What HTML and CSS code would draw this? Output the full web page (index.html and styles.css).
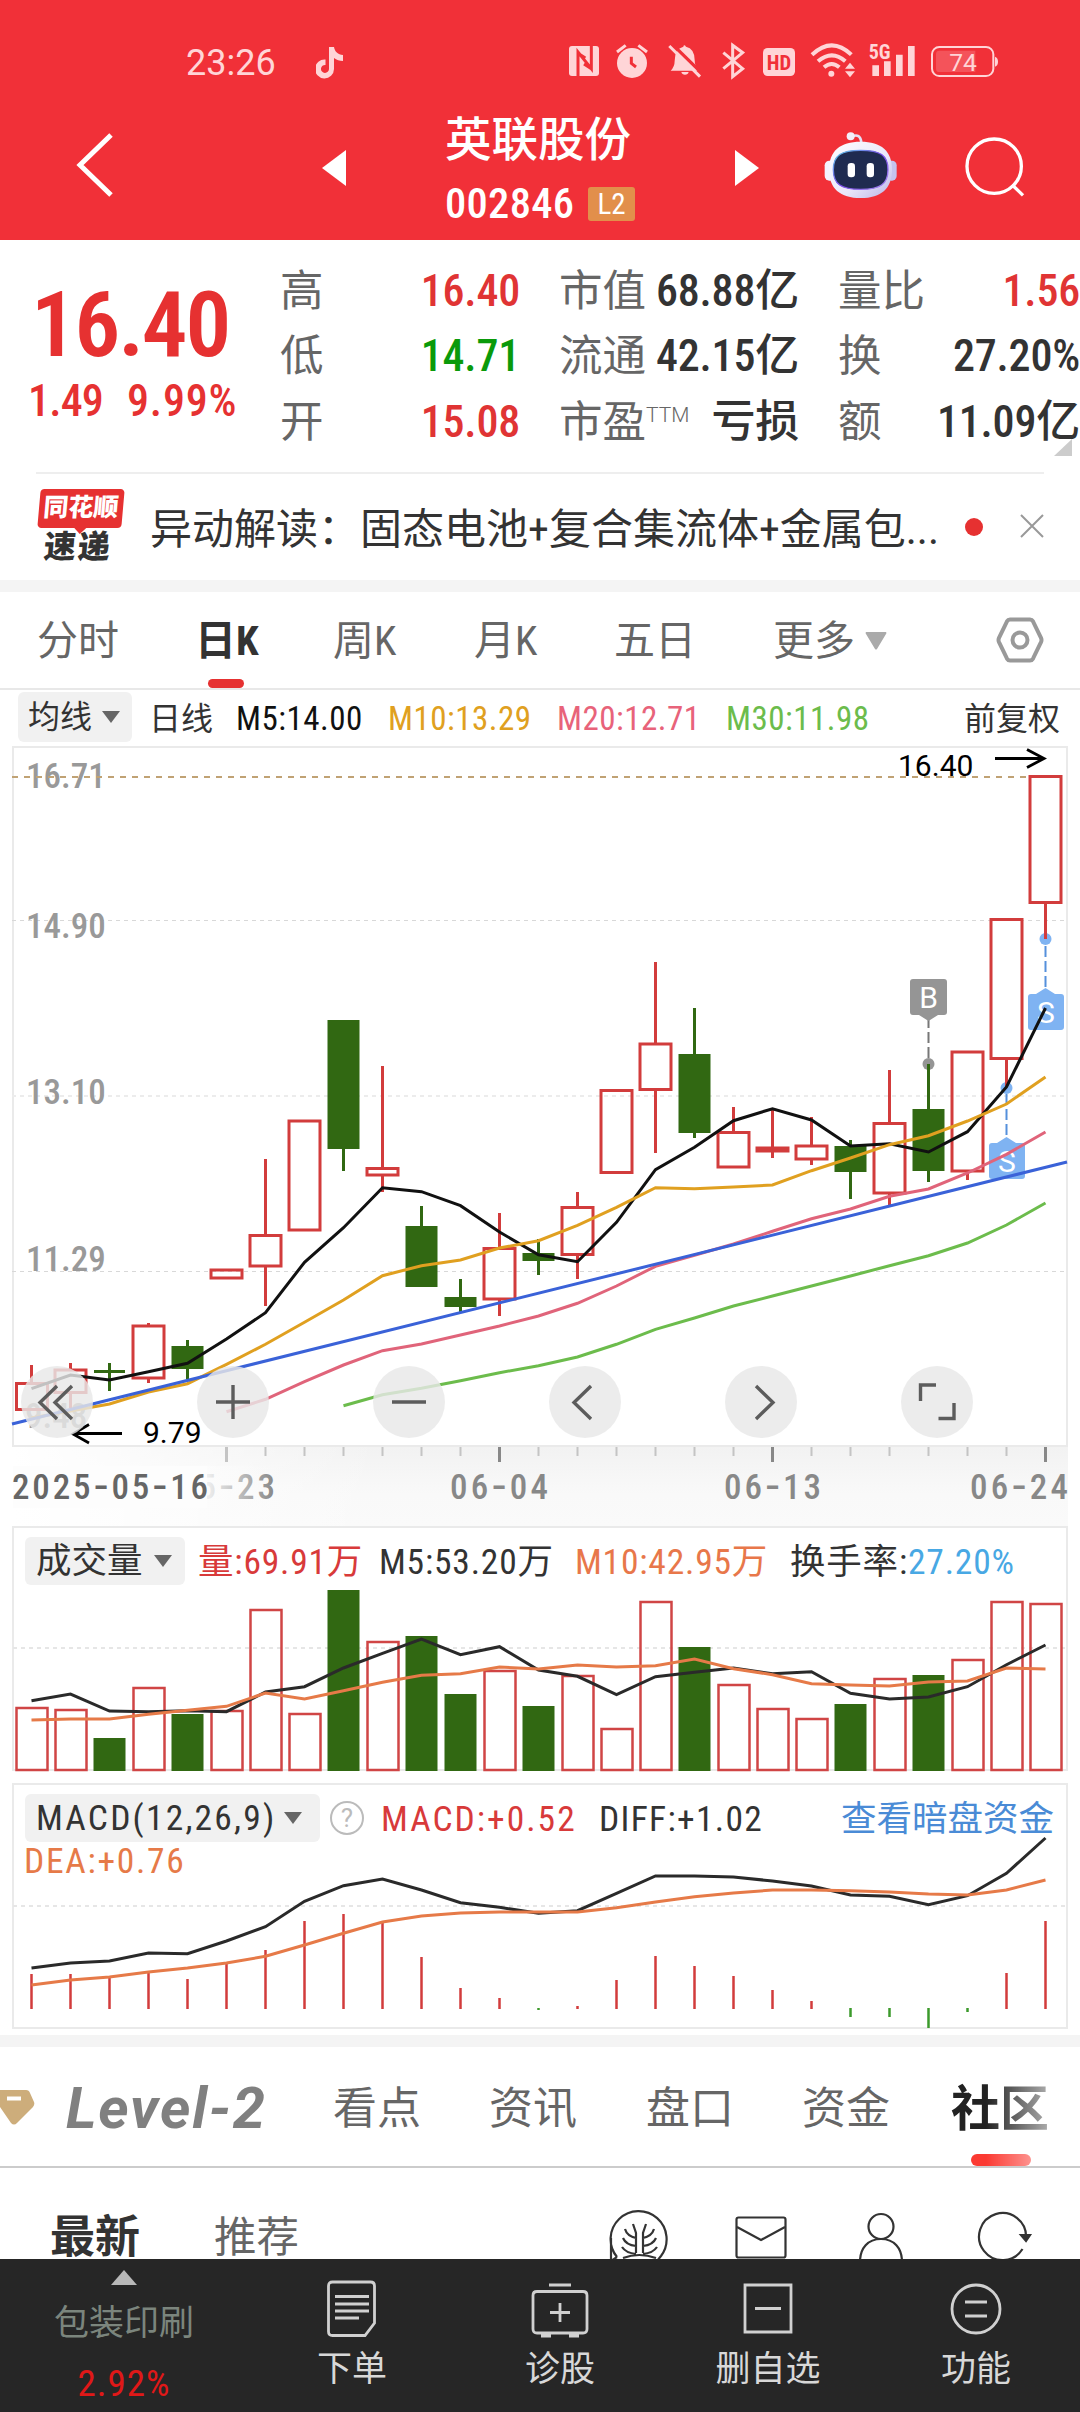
FILE: index.html
```html
<!DOCTYPE html>
<html lang="zh-CN">
<head>
<meta charset="utf-8">
<title>英联股份 002846</title>
<link rel="stylesheet" href="styles.css">
</head>
<body>
<div class="app">
  <header class="header">
    <div class="status">
      <span class="clock">23:26</span>
      <svg class="note" viewBox="0 0 28 32"><path d="M13 0h5c.6 4.500 4 7.500 9 8v6c-3.500 0-6.500-1-9-3v11a9.500 9.500 0 1 1-8.500-9.500v5.500a4 4 0 1 0 3.500 4z"/></svg>
      <svg class="status-icons" viewBox="0 30 1320 120">
        <path d="M36 48h72q9 0 9 9v72q0 9-9 9H36q-9 0-9-9V57q0-9 9-9z" class="on"/>
        <path d="M54 138V66l40 50V48M54 70l22 14M94 116l-22-14" class="cut thick"/>
        <circle cx="216" cy="99" r="45" class="on"/>
        <path d="M171 66l26-20M261 66l-26-20" class="ln"/>
        <path d="M214 80v20l14 11" class="cut thick"/>
        <path d="M332 122q12-12 12-30 0-36 26-42 2-8 8 0 26 6 26 40 0 20 12 32zM364 126h22q-2 8-11 8t-11-8z" class="on"/>
        <path d="M338 44l92 90" class="cut wide"/><path d="M328 48l92 92" class="ln"/>
        <path d="M490 68l58 48-30 24V46l30 22-58 48" class="ln"/>
        <rect x="609" y="54" width="96" height="84" rx="14" class="on"/>
        <text x="657" y="120" class="hd">HD</text>
        <path d="M756 74q60-56 118 0M774 94q42-36 82 0M792 112q23-20 46 0" class="ln arc"/>
        <circle cx="814" cy="131" r="9" class="on"/>
        <path d="M855 116l15-18 15 18zM855 124h30l-15 18z" class="on"/>
        <text x="926" y="87" class="fiveg">5G</text>
        <path d="M937 106h20v32h-20zM972 94h20v44h-20zM1008 74h20v64h-20zM1044 48h20v90h-20z" class="on"/>
        <rect x="1116" y="51" width="184" height="87" rx="22" class="ln thin"/>
        <path d="M1138 62h108v64h-108q-10 0-10-10V72q0-10 10-10z" class="charge"/>
        <path d="M1305 80q9 3 9 15t-9 15z" class="on"/>
        <text x="1209" y="122" class="pct">74</text>
      </svg>
    </div>
    <nav class="nav">
      <svg class="back" viewBox="0 0 40 64"><path d="M35 2L4 32l31 30"/></svg>
      <svg class="tri" viewBox="0 0 24 36"><path d="M24 0v36L0 18z"/></svg>
      <div class="title">
        <h1>英联股份</h1>
        <p><span>002846</span><b>L2</b></p>
      </div>
      <svg class="tri" viewBox="0 0 24 36"><path d="M0 0v36l24-18z"/></svg>
      <svg class="robot" viewBox="790 300 225 210">
        <defs>
          <linearGradient id="shell" x1="0" y1="0" x2="1" y2="1"><stop offset="0" stop-color="#fff"/><stop offset=".6" stop-color="#e9e6fa"/><stop offset="1" stop-color="#b9b4e6"/></linearGradient>
          <linearGradient id="rim" x1="0" y1="0" x2="1" y2="1"><stop offset="0" stop-color="#5fd0e8"/><stop offset=".5" stop-color="#7a4be8"/><stop offset="1" stop-color="#a78bf0"/></linearGradient>
        </defs>
        <path d="M876 320q26-12 29 18" fill="none" stroke="#e4e0f4" stroke-width="8"/>
        <circle cx="873" cy="319" r="12" fill="#f3effa"/>
        <rect x="795" y="392" width="30" height="60" rx="14" fill="#f4f2ff"/>
        <rect x="981" y="392" width="30" height="60" rx="14" fill="#c5c3ee"/>
        <path d="M903 335c62 0 94 28 94 84s-32 85-94 85-95-29-95-85 33-84 95-84z" fill="url(#shell)"/>
        <path d="M903 361c58 0 82 14 82 58s-24 59-82 59-82-15-82-59 24-58 82-58z" fill="#1f2b50" stroke="url(#rim)" stroke-width="4"/>
        <rect x="864" y="399" width="22" height="43" rx="10" fill="#fff"/><rect x="921" y="399" width="22" height="43" rx="10" fill="#fff"/>
      </svg>
      <svg class="search" viewBox="1210 315 190 190"><circle cx="1304" cy="409" r="82"/><path d="M1358 465l33 32"/></svg>
    </nav>
  </header>

  <section class="quote">
    <div class="price">
      <strong>16.40</strong>
      <p><span>1.49</span><span>9.99%</span></p>
    </div>
    <dl class="stats">
      <dt>高</dt><dd class="up">16.40</dd><dt>市值</dt><dd>68.88亿</dd><dt>量比</dt><dd class="up">1.56</dd>
      <dt>低</dt><dd class="down">14.71</dd><dt>流通</dt><dd>42.15亿</dd><dt>换</dt><dd>27.20%</dd>
      <dt>开</dt><dd class="up">15.08</dd><dt>市盈<sup>TTM</sup></dt><dd>亏损</dd><dt>额</dt><dd>11.09亿</dd>
    </dl>
    <i class="corner"></i>
  </section>

  <section class="news">
    <div class="logo"><span class="logo-top">同花顺</span><span class="logo-bottom">速递</span></div>
    <p>异动解读：固态电池+复合集流体+金属包...</p>
    <i class="dot"></i>
    <svg class="close" viewBox="0 0 24 24"><path d="M1 1l22 22M23 1L1 23"/></svg>
  </section>

  <nav class="periods">
    <a>分时</a><a class="active">日K</a><a>周K</a><a>月K</a><a>五日</a>
    <a>更多<svg viewBox="0 0 22 18"><path d="M1 0h20q1 1 0 2L12 17q-1 1-2 0L1 2q-1-1 0-2z"/></svg></a>
    <svg class="hex" viewBox="0 0 48 46"><path d="M14 2.500h20q2 0 3 1.800l8 16.500q1 2.200 0 4.400l-8 16.500q-1 1.800-3 1.800H14q-2 0-3-1.800L3 25.200q-1-2.200 0-4.400l8-16.500q1-1.800 3-1.800z"/><circle cx="24" cy="23" r="7.500"/></svg>
  </nav>

  <div class="ma">
    <span class="select">均线<i></i></span>
    <span class="day">日线</span>
    <span class="m5">M5:14.00</span><span class="m10">M10:13.29</span><span class="m20">M20:12.71</span><span class="m30">M30:11.98</span>
    <span class="adjust">前复权</span>
  </div>

  <svg class="kline" viewBox="0 746 1080 780">
    <defs>
      <linearGradient id="axis-x"><stop offset="0" stop-color="#fff"/><stop offset=".35" stop-color="#fff" stop-opacity="0"/></linearGradient>
      <linearGradient id="axis-y" x1="0" y1="0" x2="0" y2="1"><stop offset="0" stop-color="#f2f2f2"/><stop offset=".6" stop-color="#f9f9f9"/><stop offset="1" stop-color="#fafafa"/></linearGradient>
      <linearGradient id="date-fade" gradientUnits="userSpaceOnUse" x1="206" y1="0" x2="275" y2="0"><stop offset="0" stop-color="#fcfcfc" stop-opacity=".9"/><stop offset="1" stop-color="#fafafa" stop-opacity="0"/></linearGradient>
    </defs>
    <rect x="13" y="1447" width="1055" height="79" fill="url(#axis-y)"/>
    <rect x="13" y="1447" width="1055" height="79" fill="url(#axis-x)"/>
    <rect x="13" y="747" width="1054" height="699" class="frame"/>
    <path d="M12 920.500H1066M12 1271.500H1066" class="grid"/>
    <path d="M12 1096H1066" class="grid soft"/>
    <g class="price-label">
      <text x="26" y="788">16.71</text><text x="26" y="938">14.90</text><text x="26" y="1104">13.10</text><text x="26" y="1271">11.29</text><text x="25" y="1428">9.48</text>
    </g>
    <path d="M12 777H1030" class="last"/>
    <g class="mark"><circle cx="928.500" cy="1064" r="6"/><path d="M928.500 1058v-38" class="dash"/><path d="M913 979h31q3 0 3 3v30q0 3-3 3h-6l-9.500 6-9.500-6h-6q-3 0-3-3v-30q0-3 3-3z"/></g>
    <g class="mark sell"><circle cx="1045.500" cy="939" r="6"/><path d="M1045.500 946v42" class="dash"/><path d="M1030 994h6l9.500-6 9.500 6h6q3 0 3 3v30q0 3-3 3h-30q-3 0-3-3v-30q0-3 3-3z"/></g>
    <g class="mark sell"><circle cx="1006.500" cy="1088" r="6"/><path d="M1006.500 1094v43" class="dash"/><path d="M991 1143h6l9.500-6 9.500 6h6q3 0 3 3v30q0 3-3 3h-30q-3 0-3-3v-30q0-3 3-3z"/></g>
    <g class="mark-text"><text x="928.500" y="1007.500">B</text><text x="1046" y="1023">S</text><text x="1007" y="1172">S</text></g>
    <g class="red">
      <path d="M16.500 1383.500h31v26h-31zM55 1370h31v22.500h-31zM133 1326h31v52h-31zM211 1270h31v8h-31zM250 1235.500h31v30.500h-31zM289 1121h31v109h-31zM367 1168.500h31v6.500h-31zM484 1248.500h31v50.500h-31zM562 1207.500h31v47h-31zM601 1090.500h31v82h-31zM640 1044h31v45.500h-31zM718 1132.500h31v34.500h-31zM757 1148h31v3h-31zM796 1146h31v13h-31zM874 1123.500h31v69.500h-31zM952 1052h31v119h-31zM991 919.500h31v139h-31zM1030 776.500h31v126h-31z"/>
      <path d="M31.500 1365v18M70.500 1363v7M70.500 1393v15M148.500 1323v3M148.500 1379v4M265.500 1159v76M265.500 1267v39M382.500 1066v102M382.500 1175v17M499.500 1213v35M499.500 1300v16M577.500 1192v15M577.500 1256v23M655.500 962v81M655.500 1091v62M733.500 1107v25M772.500 1109v49M811.500 1117v29M811.500 1160v5M889.500 1070v53M889.500 1194v11M967.500 1172v8M1006.500 1060v27M1045.500 904v35"/>
    </g>
    <g class="green">
      <path d="M171.500 1346h32v23h-32zM327.500 1020h32v129h-32zM405.500 1226h32v61h-32zM444.500 1297h32v10h-32zM522.500 1253h32v8h-32zM678.500 1054h32v79h-32zM834.500 1146h32v26h-32zM912.500 1109h32v62h-32z"/>
      <path d="M94 1371.500h31M109.500 1363v28M187.500 1340v39M343.500 1149v22M421.500 1206v20M460.500 1279v33M538.500 1239v36M694.500 1008v130M850.500 1140v59M928.500 1064v118"/>
    </g>
    <polyline class="l30" points="343.500,1405.700 382.500,1394.700 421.500,1388.300 460.500,1380.700 499.500,1372.700 538.500,1365.700 577.500,1357 616.500,1344.300 655.500,1329.300 694.500,1318 733.500,1306 772.500,1296 811.500,1286 850.500,1276 889.500,1265.700 928.500,1255.700 967.500,1243 1006.500,1225 1045.500,1203"/>
    <polyline class="l20" points="226.500,1411.700 265.500,1399.300 304.500,1381.700 343.500,1365 382.500,1350.700 421.500,1344 460.500,1335 499.500,1326 538.500,1316 577.500,1303.300 616.500,1286 655.500,1266.300 694.500,1255.300 733.500,1244 772.500,1231.300 811.500,1218.700 850.500,1209 889.500,1196.300 928.500,1189 967.500,1173 1006.500,1154.300 1045.500,1132"/>
    <polyline class="l5" points="31.500,1388.700 70.500,1375 109.500,1380 148.500,1371.700 187.500,1363.300 226.500,1339 265.500,1312.700 304.500,1262.300 343.500,1227.700 382.500,1187.700 421.500,1191.700 460.500,1205.700 499.500,1232 538.500,1254.700 577.500,1261.700 616.500,1222.300 655.500,1169.700 694.500,1147.300 733.500,1120.700 772.500,1108.700 811.500,1120 850.500,1146 889.500,1143.700 928.500,1152 967.500,1131.700 1006.500,1087 1045.500,1008"/>
    <polyline class="l10" points="31.500,1418 70.500,1411 109.500,1404 148.500,1392 187.500,1383.700 226.500,1364.300 265.500,1344.300 304.500,1322.300 343.500,1300 382.500,1275.700 421.500,1265.700 460.500,1260 499.500,1248 538.500,1240.700 577.500,1225.300 616.500,1207.300 655.500,1187.700 694.500,1188.700 733.500,1187 772.500,1185 811.500,1170.700 850.500,1158 889.500,1144.700 928.500,1135.700 967.500,1121 1006.500,1104 1045.500,1077"/>
    <path d="M12 1424L1067 1162" class="trend"/>
    <g class="extreme">
      <text x="898" y="776">16.40</text><path d="M995 758.500h48M1027 749.500l17 9-17 9"/>
      <text x="143" y="1443">9.79</text><path d="M122 1433.500H74M89 1424.500l-16 9.500 16 9"/>
    </g>
    <g class="tool">
      <circle cx="57" cy="1402" r="36"/><circle cx="233" cy="1402" r="36"/><circle cx="409" cy="1402" r="36"/><circle cx="585" cy="1402" r="36"/><circle cx="761" cy="1402" r="36"/><circle cx="937" cy="1402" r="36"/>
      <path d="M57 1386l-17 16.500 17 16.500M72 1386l-17 16.500 17 16.500M216 1402h34M233 1385v34M392 1402h34M591 1386l-17 16.500 17 16.500M756 1386l17 16.500-17 16.500M920.500 1401v-16H936M938.500 1418.500h15.500V1403"/>
    </g>
    <path class="tick" d="M265.500 1447v9M304.500 1447v9M343.500 1447v9M382.500 1447v9M421.500 1447v9M460.500 1447v9M538.500 1447v9M577.500 1447v9M616.500 1447v9M655.500 1447v9M694.500 1447v9M733.500 1447v9M811.500 1447v9M850.500 1447v9M889.500 1447v9M928.500 1447v9M967.500 1447v9M1006.500 1447v9"/>
    <path class="tick wide" d="M226.500 1447v15"/>
    <path class="tick major" d="M499.500 1447v15M772.500 1447v15M1045.500 1447v15"/>
    <g class="dates">
      <text x="178" y="1499" textLength="97">05<tspan>-</tspan>23</text>
      <rect x="170" y="1466" width="106" height="42" fill="url(#date-fade)"/>
      <rect x="13" y="1466" width="194" height="42" fill="#fdfdfd"/>
      <text x="12" y="1499" textLength="196" class="first">2025<tspan>-</tspan>05<tspan>-</tspan>16</text>
      <text x="450" y="1499" textLength="98">06<tspan>-</tspan>04</text><text x="724" y="1499" textLength="97">06<tspan>-</tspan>13</text><text x="970" y="1499" textLength="98">06<tspan>-</tspan>24</text>
    </g>
  </svg>

  <section class="panel volume">
    <svg class="plot" viewBox="0 1526 1080 246">
      <path d="M13 1771V1527H1067V1771M13 1770H1067" class="frame"/>
      <path d="M13 1648H1067" class="grid dots"/>
      <path class="vred" d="M16.500 1708h31v62h-31zM55.500 1710h31v60h-31zM133.500 1688h31v82h-31zM211.500 1711h31v59h-31zM250.500 1610h31v160h-31zM289.500 1714h31v56h-31zM367.500 1642h31v128h-31zM484.500 1671h31v99h-31zM562.500 1676h31v94h-31zM601.500 1729h31v41h-31zM640.500 1602h31v168h-31zM718.500 1685h31v85h-31zM757.500 1709h31v61h-31zM796.500 1719h31v51h-31zM874.500 1679h31v91h-31zM952.500 1660h31v110h-31zM991.500 1602h31v168h-31zM1030.500 1604h31v166h-31z"/>
      <path class="vgreen" d="M93.500 1738h32v33h-32zM171.500 1714h32v57h-32zM327.500 1590h32v181h-32zM405.500 1636h32v135h-32zM444.500 1694h32v77h-32zM522.500 1706h32v65h-32zM678.500 1647h32v124h-32zM834.500 1704h32v67h-32zM912.500 1675h32v96h-32z"/>
      <polyline class="dark" points="31.500,1700.700 70.500,1694 109.500,1711 148.500,1711.700 187.500,1710.700 226.500,1711.700 265.500,1692 304.500,1686.700 343.500,1668 382.500,1653.300 421.500,1639 460.500,1654.700 499.500,1646.700 538.500,1670 577.500,1676.300 616.500,1694.700 655.500,1676.700 694.500,1672.300 733.500,1668 772.500,1673.700 811.500,1671.700 850.500,1693.300 889.500,1699 928.500,1697 967.500,1686.700 1006.500,1664.700 1045.500,1645"/>
      <polyline class="orange" points="31.500,1720 70.500,1719 109.500,1719 148.500,1714.300 187.500,1710.300 226.500,1706.300 265.500,1693 304.500,1699 343.500,1690.700 382.500,1682.300 421.500,1675.300 460.500,1673.700 499.500,1667 538.500,1669 577.500,1665 616.500,1667 655.500,1665.700 694.500,1659 733.500,1668.700 772.500,1674.700 811.500,1683.700 850.500,1685 889.500,1686 928.500,1682 967.500,1681 1006.500,1668 1045.500,1669"/>
    </svg>
    <div class="legend">
      <span class="select">成交量<i></i></span>
      <span class="c-red">量:69.91万</span><span>M5:53.20万</span><span class="c-orange">M10:42.95万</span><span>换手率:<em>27.20%</em></span>
    </div>
  </section>

  <section class="panel macd">
    <svg class="plot" viewBox="0 1783 1080 246">
      <rect x="13" y="1784" width="1054" height="244" class="frame"/>
      <path d="M13 1906H1067" class="grid dots"/>
      <path class="mred" d="M31.500 1974v35M70.500 1974v35M109.500 1977v32M148.500 1972v37M187.500 1979v30M226.500 1963v46M265.500 1950v59M304.500 1921v88M343.500 1914v95M382.500 1922v87M421.500 1957v52M460.500 1988v21M499.500 1998v11M577.500 2006v3M616.500 1980v29M655.500 1956v53M694.500 1966v43M733.500 1976v33M772.500 1990v19M811.500 2001v8M1006.500 1973v36M1045.500 1921v88"/>
      <path class="mgreen" d="M538.500 2008v2M850.500 2008v9M889.500 2008v9M928.500 2008v20M967.500 2008v4"/>
      <polyline class="dark" points="31.500,1968 70.500,1963 109.500,1961 148.500,1953 187.500,1953.700 226.500,1941 265.500,1926.700 304.500,1901.300 343.500,1885.700 382.500,1879 421.500,1890 460.500,1902.700 499.500,1907.300 538.500,1913.300 577.500,1910.700 616.500,1893.300 655.500,1876 694.500,1876 733.500,1877 772.500,1881 811.500,1886 850.500,1895 889.500,1896.300 928.500,1904.700 967.500,1895.700 1006.500,1873.300 1045.500,1838"/>
      <polyline class="orange" points="31.500,1985 70.500,1980 109.500,1977 148.500,1972 187.500,1968 226.500,1963 265.500,1956.300 304.500,1945 343.500,1933.300 382.500,1922 421.500,1916 460.500,1913 499.500,1912 538.500,1912 577.500,1912 616.500,1907.700 655.500,1902 694.500,1896.700 733.500,1893 772.500,1890 811.500,1890 850.500,1890.700 889.500,1892 928.500,1894 967.500,1895 1006.500,1890 1045.500,1880"/>
    </svg>
    <div class="legend">
      <span class="select">MACD(12,26,9)<i></i></span>
      <b class="help">?</b>
      <span class="c-red">MACD:+0.52</span><span class="diff">DIFF:+1.02</span><a>查看暗盘资金</a>
    </div>
    <p class="dea">DEA:+0.76</p>
  </section>

  <nav class="tabs">
    <svg class="gem" viewBox="0 0 36 36"><path d="M0 1h26q3 0 4 3l4 9q1 2-1 5L17 34q-3 3-6 0L0 18z" fill="#cdad7b"/><path d="M7 9.500h14" stroke="#fff" stroke-width="4"/></svg>
    <a class="level">Level-2</a><a>看点</a><a>资讯</a><a>盘口</a><a>资金</a><a class="active">社区</a>
  </nav>

  <section class="feed">
    <b>最新</b><span>推荐</span>
    <svg viewBox="0 0 60 60"><path d="M8 49A28 28 0 1 1 52 48M2 30v22M8 49L2 53M52 48l-4 5"/><path d="M27 45V25l-3-9M34 45V25l3-9M14 50q16-6 33 0M16 21q2 7 11 9M14 30q3 7 13 8M13 39q4 6 14 7M45 21q-2 7-11 9M47 30q-3 7-13 8M48 39q-4 6-14 7"/></svg>
    <svg viewBox="0 0 60 60"><rect x="5.500" y="9.500" width="49" height="40" rx="2"/><path d="M6 19l24 13 24-13"/></svg>
    <svg viewBox="0 0 60 60"><circle cx="30" cy="18.500" r="12.500"/><path d="M9 54c0-14 8-23 21-23s21 9 21 23"/></svg>
    <svg viewBox="0 0 60 60"><path d="M49.500 41A23.500 23.500 0 1 1 53 30"/><path d="M48 27h9l-4 6z" class="solid"/></svg>
  </section>

  <footer class="bar">
    <div class="sector"><i></i><span>包装印刷</span><b>2.92%</b></div>
    <a><svg viewBox="0 0 60 60"><path d="M10.500 3h38q4 0 4 4v37L43 56.500H10.500q-4 0-4-4V7q0-4 4-4zM13 17.500h34M13 25h34M13 32h34M13 39h24"/></svg>下单</a>
    <a><svg viewBox="0 0 60 60"><path d="M7 12.500h46q4 0 4 4V50q0 4-4 4H7q-4 0-4-4V16.500q0-4 4-4zM19 6h22M30 24v19M20 33.500h20M11 57h10M39 57h10"/></svg>诊股</a>
    <a><svg viewBox="0 0 60 60"><path d="M7 6h46v47H7zM17 29.500h26"/></svg>删自选</a>
    <a><svg viewBox="0 0 60 60"><circle cx="30" cy="30" r="24"/><path d="M19 23h22M19 37h22"/></svg>功能</a>
  </footer>
</div>
</body>
</html>
```
FILE: styles.css
```css
* { box-sizing: border-box; margin: 0; padding: 0; }
body { background: #fff; font-family: "Roboto Condensed", "Noto Sans CJK SC", sans-serif; color: #333; }
svg { display: block; fill: none; }
i, em { font-style: normal; }
.app { width: 1080px; height: 2412px; overflow: hidden; display: flex; flex-direction: column; }
.app > * { flex: none; }

/* header */
.header { height: 240px; background: #f13038; color: #fff; }
.status { height: 90px; padding: 40px 0 0 186px; display: flex; align-items: flex-start; }
.clock { width: 130px; font: 400 36px/46px Roboto, sans-serif; color: #ffd5d7; }
.note { width: 28px; height: 32px; margin: 7px 216px 0 0; fill: #ffd5d7; }
.status-icons { width: 440px; height: 40px; overflow: visible; }
.status-icons .on { fill: #ffd5d7; }
.status-icons .ln { stroke: #ffd5d7; stroke-width: 9; }
.status-icons .arc { stroke-width: 12; }
.status-icons .thin { stroke-width: 6; }
.status-icons .cut { stroke: #f13038; stroke-width: 8; }
.status-icons .thick { stroke-width: 9; }
.status-icons .wide { stroke-width: 10; }
.status-icons .charge { fill: #f4535a; }
.status-icons text { font-family: "Roboto Condensed", sans-serif; fill: #ffd5d7; }
.status-icons .hd { font-size: 62px; font-weight: 700; fill: #f13038; text-anchor: middle; }
.status-icons .fiveg { font-size: 60px; font-weight: 700; }
.status-icons .pct { font-family: Roboto, sans-serif; font-size: 74px; font-weight: 400; text-anchor: middle; }
.nav { height: 150px; padding: 17px 0 0 76px; display: grid; grid-template-columns: 246px 123px 290px 90px 138px 80px; align-items: start; }
.back { width: 40px; height: 64px; margin-top: 26px; stroke: #fff; stroke-width: 5; }
.tri { width: 24px; height: 36px; margin-top: 43px; fill: #fff; }
.title h1 { height: 66px; font-size: 46.500px; font-weight: 500; line-height: 66px; white-space: nowrap; }
.title p { display: flex; align-items: center; gap: 15px; margin-top: 14px; }
.title span { width: 128px; font-size: 42.500px; line-height: 34px; font-weight: 500; letter-spacing: .3px; }
.title b { width: 47px; height: 34px; border-radius: 3px; background: #e28f4b; font-size: 29px; font-weight: 400; line-height: 34px; text-align: center; }
.robot { width: 75px; height: 70px; margin: 23px 0 0 -2px; }
.search { width: 63px; height: 63px; margin-top: 28px; stroke: #fff; stroke-width: 10; }

/* quote */
.quote { height: 232px; padding-top: 18px; display: grid; grid-template-columns: 280px 800px; position: relative; }
.price { padding-left: 31px; color: #e63131; }
.price strong { display: block; margin-top: 15px; font-size: 91px; font-weight: 600; line-height: 104px; letter-spacing: -2.200px; }
.price p { display: flex; gap: 24px; margin: -1px 0 0 -3px; font-size: 44px; line-height: 50px; letter-spacing: -.8px; font-weight: 500; }
.price p span + span { letter-spacing: .8px; }
.stats { display: grid; grid-template-columns: 110px 130px 140px 139px 130px 151px; grid-template-rows: repeat(3, 65.300px); font-size: 44px; line-height: 67px; }
.stats dt { color: #666; font-size: 43.500px; white-space: nowrap; }
.stats dt:nth-of-type(3n+2), .stats dt:nth-of-type(3n) { padding-left: 39px; }
.stats dd { display: flex; justify-content: flex-end; white-space: nowrap; font-weight: 500; letter-spacing: -.2px; }
.stats sup { display: inline-block; font: 300 21px/1 Roboto, sans-serif; vertical-align: 15px; }
.stats .up { color: #e03434; }
.stats .down { color: #0a9a0a; }
.corner { position: absolute; right: 8px; bottom: 16px; border-style: solid; border-width: 0 0 17px 18px; border-color: transparent transparent #ccc; }

/* news strip */
.news { height: 108px; margin: 0 36px; border-top: 2px solid #eee; display: grid; grid-template-columns: 114px 815px 55px 24px; align-items: center; }
.news p { margin-top: 5px; font-size: 42px; line-height: 60px; white-space: nowrap; }
.logo { width: 90px; height: 76px; font-weight: 900; line-height: 40px; }
.logo-top { position: relative; display: block; width: 84px; height: 39px; margin: 0 0 0 3px; border-radius: 4px; background: #e63131; color: #fff; font-size: 25px; line-height: 37px; text-align: center; transform: skewX(-5deg); white-space: nowrap; }
.logo-top::after { content: ""; position: absolute; left: 36px; top: 38px; border-style: solid; border-width: 7px 7px 0; border-color: #e63131 transparent transparent; }
.logo-bottom { display: block; margin: 0 0 0 8px; font-size: 32px; line-height: 38px; letter-spacing: 2px; white-space: nowrap; transform: skewX(-5deg); }
.dot { width: 18px; height: 18px; border-radius: 50%; background: #e63131; }
.close { width: 24px; height: 24px; margin-top: -3px; stroke: #999; stroke-width: 2; }

/* period tabs */
.periods { height: 110px; border-top: 12px solid #f4f4f4; border-bottom: 2px solid #e8e8e8; padding: 0 0 0 37px; display: grid; grid-template-columns: 160px 136px 141px 140px 159px 223px 48px; color: #666; font-size: 41px; line-height: 99px; }
.periods a { position: relative; height: 96px; white-space: nowrap; }
.periods .active { color: #333; font-weight: 700; text-indent: -2px; }
.periods .active::after { content: ""; position: absolute; left: 11px; bottom: 0; width: 36px; height: 9px; border-radius: 5px; background: #e63131; }
.periods a svg { display: inline-block; width: 22px; height: 18px; margin-left: 10px; vertical-align: 5px; fill: #aaa; }
.hex { width: 48px; height: 46px; margin-top: 25px; stroke: #999; stroke-width: 4; }

/* moving average row */
.select { background: #f1f1f1; border-radius: 6px; display: flex; align-items: center; white-space: nowrap; }
.select i { border-style: solid; border-width: 12px 9px 0; border-color: #666 transparent transparent; }
.ma { height: 56px; padding-left: 18px; display: grid; grid-template-columns: 131px 87px 152px 169px 169px 238px 100px; align-items: start; font-size: 32px; line-height: 58px; white-space: nowrap; }
.ma .select { width: 114px; height: 50px; margin-top: 2px; padding-left: 10px; gap: 10px; line-height: 50px; }
.ma .m5, .ma .m10, .ma .m20, .ma .m30 { font-weight: 450; font-size: 33px; letter-spacing: .5px; }
.m5 { color: #111; } .m10 { color: #e0a020; } .m20 { color: #e8637a; } .m30 { color: #6cbc4c; }

/* candlestick chart */
.kline { width: 1080px; height: 780px; }
.frame { stroke: #eaeaea; stroke-width: 2; }
.grid { stroke: #d8d8d8; stroke-width: 1; stroke-dasharray: 4; }
.soft { stroke: #ececec; stroke-width: 2; }
.dots { stroke: #e6e6e6; stroke-width: 2; }
.last { stroke: #c0a274; stroke-width: 2; stroke-dasharray: 6; }
.price-label { font-size: 35px; fill: #999; font-weight: 500; }
.red { stroke: #d23c3c; stroke-width: 3; }
.green { fill: #316812; stroke: #316812; stroke-width: 3; }
.green path:first-child { stroke: none; }
.kline polyline, .plot polyline { stroke-width: 3; }
.l5 { stroke: #111; } .l10 { stroke: #e0a020; } .l20 { stroke: #e0647a; } .l30 { stroke: #6cbc4c; }
.trend { stroke: #3a62d8; stroke-width: 3; }
.mark { fill: #959595; }
.mark .dash { stroke: #777; stroke-width: 2; stroke-dasharray: 11 4; }
.sell { fill: #7fb3f2; }
.sell .dash { stroke: #5590dc; }
.mark-text { font: 400 30px Roboto, sans-serif; fill: #fff; text-anchor: middle; }
.extreme text { font: 400 30px Roboto, sans-serif; fill: #000; }
.extreme path { stroke: #000; stroke-width: 2.800; }
.tool circle { fill: rgba(232, 232, 232, .82); }
.tool path { stroke: #5c5c5c; stroke-width: 3.400; }
.tick { stroke: #c4c4c4; stroke-width: 2; }
.tick.wide { stroke-width: 3; }
.major { stroke: #888; stroke-width: 3; }
.dates { font-size: 35px; font-weight: 500; fill: #888; }
.dates tspan { font-family: "DejaVu Sans", sans-serif; font-size: 42px; font-weight: 400; }
.first { fill: #666; }

/* volume and MACD panels */
.panel { display: grid; height: 246px; }
.panel .plot { grid-area: 1 / 1; width: 1080px; height: 246px; }
.legend { grid-area: 1 / 1; height: 60px; padding: 11px 0 0 25px; display: grid; align-items: start; font-size: 35.500px; line-height: 51px; letter-spacing: .8px; white-space: nowrap; }
.legend .select { height: 48px; padding-left: 11px; gap: 10px; letter-spacing: 0; }
.volume .legend { grid-template-columns: 173px 181px 196px 215px 280px; }
.volume .select { width: 160px; gap: 11px; }
.c-red { color: #d83a3a; } .c-orange { color: #e8774a; } .legend em { color: #48a8e4; }
.vred { stroke: #d04545; stroke-width: 2.500; } .vgreen { fill: #316812; }
.dark { stroke: #2a2a2a; } .orange { stroke: #e67a48; }
.mred { stroke: #d23c3c; stroke-width: 2.500; } .mgreen { stroke: #3c9a2c; stroke-width: 2.500; }
.macd { margin-top: 11px; }
.macd .legend { grid-template-columns: 305px 51px 218px 242px 220px; letter-spacing: 2px; }
.macd .legend .select { width: 295px; gap: 8px; letter-spacing: 2.200px; }
.macd .legend .diff { letter-spacing: 1.300px; }
.help { width: 34px; height: 34px; margin-top: 7px; border: 2px solid #bbb; border-radius: 50%; color: #bbb; font: 400 26px/31px Roboto, sans-serif; letter-spacing: 0; text-align: center; }
.legend a { color: #4a8bd6; letter-spacing: 0; }
.dea { grid-area: 1 / 1; align-self: start; margin: 58px 0 0 24px; font-size: 35.500px; line-height: 40px; letter-spacing: 1.700px; color: #e67a48; }

/* community tabs */
.tabs { height: 133px; margin-top: 6px; border-top: 12px solid #f4f4f4; border-bottom: 2px solid #ccc; display: grid; grid-template-columns: 66px 267px 156px 157px 156px 149px 110px; font-size: 44px; line-height: 125px; color: #666; white-space: nowrap; }
.tabs a { height: 119px; }
.gem { width: 36px; height: 36px; margin-top: 42px; }
.level { font: italic 700 58px/123px Roboto, sans-serif; letter-spacing: 1.800px; color: #808080; }
.tabs .active { position: relative; font-size: 49px; font-weight: 700; color: #222; width: 100px; -webkit-mask-image: linear-gradient(90deg, #000 35%, rgba(0, 0, 0, .35)); mask-image: linear-gradient(90deg, #000 35%, rgba(0, 0, 0, .35)); }
.tabs .active::after { content: ""; position: absolute; left: 20px; bottom: 0; width: 60px; height: 12px; border-radius: 6px; background: #fb3a32; }
.feed { height: 91px; padding-left: 50px; display: grid; grid-template-columns: 164px 395px 122px 120px 122px 60px; font-size: 42.500px; line-height: 140px; color: #666; white-space: nowrap; overflow: hidden; }
.feed b { font-size: 45px; color: #333; }
.feed svg { width: 60px; height: 60px; margin-top: 40px; stroke: #333; stroke-width: 2.200; overflow: visible; }
.feed .solid { fill: #333; }

/* bottom bar */
.bar { height: 153px; background: #262626; display: grid; grid-template-columns: 248px repeat(4, 208px); color: #d8d8d8; font-size: 35px; }
.bar a { display: flex; flex-direction: column; align-items: center; padding-top: 20px; line-height: 61px; }
.bar a svg { width: 60px; height: 60px; stroke: #d0d0d0; stroke-width: 2.800; }
.sector { display: flex; flex-direction: column; align-items: center; }
.sector i { margin-top: 11px; border-style: solid; border-width: 0 13px 15px; border-color: transparent transparent #b8b8b8; }
.sector span { margin-top: 14px; line-height: 50px; color: #7b857d; }
.sector b { margin-top: 13px; font: 400 37px/44px "Roboto Condensed", sans-serif; letter-spacing: 1px; color: #e01818; }
```
